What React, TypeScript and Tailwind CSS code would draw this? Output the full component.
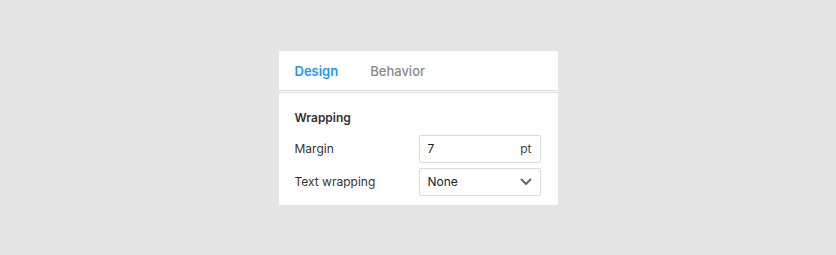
import React from 'react';

export default function App() {
  return (
    <div className="w-[836px] h-[255px] bg-[#e5e5e5] pt-[51px] font-['Inter',sans-serif] text-[12px] text-[#333]">
      <div className="mx-auto w-[279px] bg-white">
        <div className="flex h-[40px] items-center gap-8 border-b border-[#dcdcdc] px-4 pt-[2px] text-[13px]">
          <span className="font-semibold text-[#2196f3]">Design</span>
          <span className="font-medium text-[#8a8a8a]">Behavior</span>
        </div>
        <div className="h-px bg-white" />
        <div className="border-t border-[#dcdcdc] pl-4 pr-[17px] pt-[17px] pb-[9px]">
          <div className="h-4 leading-4 font-semibold text-[#333]">Wrapping</div>
          <div className="mt-[9px] flex flex-col gap-[5px]">
            <div className="flex h-7 items-center justify-between">
              <span>Margin</span>
              <div className="flex h-7 w-[122px] items-center justify-between rounded-[2px] border border-[#dadada] pl-2 pr-2">
                <span className="text-[#222]">7</span>
                <span className="text-[#444]">pt</span>
              </div>
            </div>
            <div className="flex h-7 items-center justify-between">
              <span>Text wrapping</span>
              <div className="flex h-7 w-[122px] items-center justify-between rounded-[2px] border border-[#dadada] pl-2 pr-2">
                <span className="text-[#222]">None</span>
                <svg width="12" height="8" viewBox="0 0 12 8" fill="none">
                  <path d="M1.5 1.5 L6 6 L10.5 1.5" stroke="#666" strokeWidth="2" strokeLinecap="round" strokeLinejoin="round" />
                </svg>
              </div>
            </div>
          </div>
        </div>
      </div>
    </div>
  );
}
